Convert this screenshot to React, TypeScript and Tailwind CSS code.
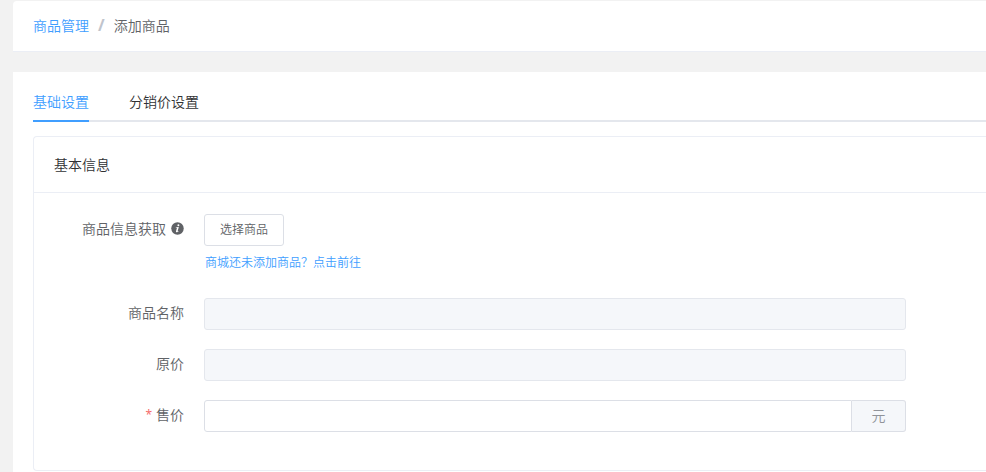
import { ReactNode, useState } from "react";
import clsx from "clsx";

const tabs = ["基础设置", "分销价设置"];

const inputClass =
  "h-8 w-full min-w-0 rounded-[3px] border border-[#dcdfe6] bg-white px-3 text-sm text-[#606266] outline-none focus:border-[#409eff] disabled:cursor-not-allowed disabled:border-[#e4e7ed] disabled:bg-[#f5f7fa]";

function InfoIcon() {
  return (
    <svg viewBox="0 0 13 13" className="ml-[5px] size-[13px] shrink-0" aria-hidden="true">
      <circle cx="6.5" cy="6.5" r="6.25" fill="#606266" />
      <circle cx="7.4" cy="3.3" r="1" fill="#fff" />
      <path d="M4.8 5.3 7.8 4.9 6.7 9c-.1.5.3.5.9 0l.2.3C6.6 10.6 4.6 10.7 5 9.2L5.9 6C6 5.6 5.6 5.7 4.8 5.7Z" fill="#fff" />
    </svg>
  );
}

interface FormRowProps {
  label: string;
  htmlFor: string;
  required?: boolean;
  icon?: ReactNode;
  children: ReactNode;
}

function FormRow({ label, htmlFor, required, icon, children }: FormRowProps) {
  return (
    <div className="flex items-start">
      <label
        htmlFor={htmlFor}
        className="flex h-7 w-[170px] shrink-0 items-center justify-end pr-5 text-sm text-[#606266]"
      >
        {required && <span className="mr-1 pt-0.5 font-['Noto_Sans',sans-serif] text-xs font-normal text-[#f56c6c]">*</span>}
        {label}
        {icon}
      </label>
      <div className="min-w-0 flex-1">{children}</div>
    </div>
  );
}

export default function App() {
  const [active, setActive] = useState(0);
  const [price, setPrice] = useState("");

  return (
    <div className="flex min-h-screen flex-col bg-[#f2f2f2] pt-px pl-[13px] font-['Noto_Sans_CJK_SC','Noto_Sans',sans-serif] text-sm font-[350]">
      <nav className="flex h-[50px] items-center rounded-tl bg-white px-5 pb-0.5 shadow-[0_1px_0_#ebeef5]" aria-label="breadcrumb">
        <a href="#goods" className="text-[#409eff]">商品管理</a>
        <span className="mx-[9px] font-['Noto_Sans',sans-serif] text-base font-bold text-[#c0c4cc]">/</span>
        <span className="text-[#606266]">添加商品</span>
      </nav>

      <main className="mt-[21px] flex-1 bg-white pt-[10px] pl-5">
        <div role="tablist" className="flex h-10 gap-10 shadow-[inset_0_-2px_0_#e4e7ed]">
          {tabs.map((tab, i) => (
            <button
              key={tab}
              type="button"
              role="tab"
              aria-selected={i === active}
              onClick={() => setActive(i)}
              className={clsx(
                "cursor-pointer border-b-2",
                i === active ? "border-[#409eff] text-[#409eff]" : "border-transparent text-[#303133]"
              )}
            >
              {tab}
            </button>
          ))}
        </div>

        <section className="mt-[14px] rounded-l border border-r-0 border-[#ebeef5]">
          <h2 className="flex h-14 items-center border-b border-[#ebeef5] px-5 pb-0.5 font-[350] text-[#303133]">基本信息</h2>

          <form className="flex flex-col gap-[19px] pt-[21px] pr-20 pb-[38px]">
            <FormRow label="商品信息获取" htmlFor="pick" icon={<InfoIcon />}>
              <button
                id="pick"
                type="button"
                className="block h-8 cursor-pointer rounded-[3px] border border-[#dcdfe6] bg-white px-[15px] pb-0.5 text-xs text-[#606266]"
              >
                选择商品
              </button>
              <a href="#mall" className="mt-2 ml-px block h-[25px] text-xs leading-4 text-[#409eff]">
                商城还未添加商品？点击前往
              </a>
            </FormRow>
            <FormRow label="商品名称" htmlFor="name">
              <input id="name" disabled className={inputClass} />
            </FormRow>
            <FormRow label="原价" htmlFor="origin">
              <input id="origin" disabled className={inputClass} />
            </FormRow>
            <FormRow label="售价" htmlFor="price" required>
              <div className="flex">
                <input
                  id="price"
                  value={price}
                  onChange={(e) => setPrice(e.target.value)}
                  className={clsx(inputClass, "rounded-r-none")}
                />
                <span className="flex h-8 w-[54px] shrink-0 items-center justify-center rounded-r-[3px] border border-l-0 border-[#dcdfe6] bg-[#f5f7fa] pb-0.5 text-[#909399]">
                  元
                </span>
              </div>
            </FormRow>
          </form>
        </section>
      </main>
    </div>
  );
}
